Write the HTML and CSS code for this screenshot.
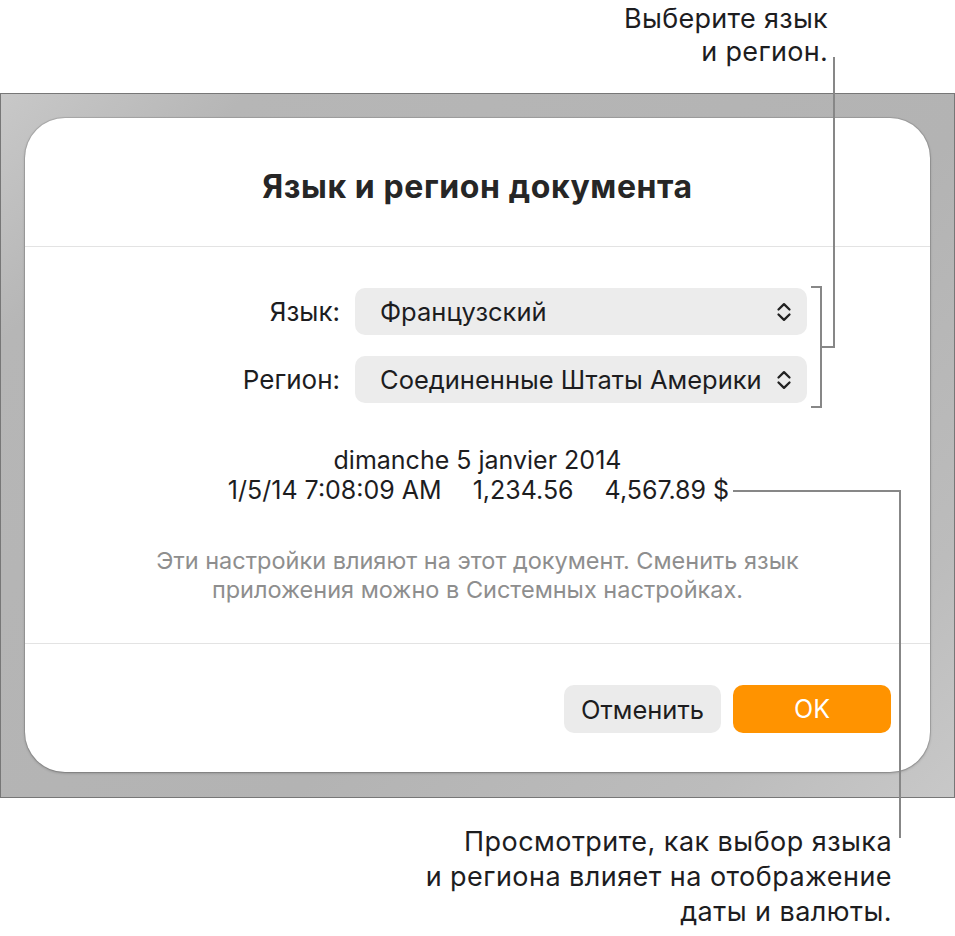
FILE: index.html
```html
<!DOCTYPE html>
<html lang="ru">
<head>
<meta charset="utf-8">
<link rel="stylesheet" href="styles.css">
</head>
<body>
<div class="page">
  <div class="callout callout-top">Выберите язык<br>и регион.</div>

  <div class="frame">
    <div class="dialog">
      <div class="dialog-header">Язык и регион документа</div>

      <div class="form">
        <div class="label">Язык:</div>
        <div class="select">
          <span>Французский</span>
          <svg class="chev" width="16" height="22" viewBox="0 0 16 22"><path d="M2.5 8.5 L8 3.2 L13.5 8.5 M2.5 13.5 L8 18.8 L13.5 13.5" fill="none" stroke="#222" stroke-width="2.3" stroke-linecap="round" stroke-linejoin="round"/></svg>
        </div>
        <div class="label">Регион:</div>
        <div class="select">
          <span>Соединенные Штаты Америки</span>
          <svg class="chev" width="16" height="22" viewBox="0 0 16 22"><path d="M2.5 8.5 L8 3.2 L13.5 8.5 M2.5 13.5 L8 18.8 L13.5 13.5" fill="none" stroke="#222" stroke-width="2.3" stroke-linecap="round" stroke-linejoin="round"/></svg>
        </div>
      </div>

      <div class="preview">
        <div>dimanche 5 janvier 2014</div>
        <div class="nums"><span>1/5/14 7:08:09 AM</span><span>1,234.56</span><span>4,567.89 $</span></div>
      </div>

      <div class="note">Эти настройки влияют на этот документ. Сменить язык<br>приложения можно в Системных настройках.</div>

      <div class="footer">
        <button class="btn btn-cancel">Отменить</button>
        <button class="btn btn-ok">OK</button>
      </div>
    </div>
  </div>

  <div class="callout callout-bottom">Просмотрите, как выбор языка<br>и региона влияет на отображение<br>даты и валюты.</div>

  <svg class="leaders" width="955" height="936" viewBox="0 0 955 936">
    <g fill="none" stroke="#878787" stroke-width="2">
      <path d="M811 287 H821 V407 H811"/>
      <path d="M821 347 H834 V57"/>
      <path d="M733 491 H900 V838"/>
    </g>
  </svg>
</div>
</body>
</html>
```

FILE: styles.css
```css
* { box-sizing: border-box; }

html, body {
  margin: 0;
  padding: 0;
  background: #ffffff;
}

body {
  font-family: "Inter", "Roboto", "Liberation Sans", sans-serif;
  color: #1d1d1f;
}

.page {
  position: relative;
  width: 955px;
  height: 936px;
  overflow: hidden;
}

.callout {
  font-size: 27px;
  line-height: 33px;
  color: #1d1d1f;
  text-align: right;
  letter-spacing: 0.3px;
  white-space: nowrap;
}

.callout-top {
  padding-top: 2px;
  padding-right: 127px;
  height: 93px;
}

.callout-bottom {
  margin-top: 26px;
  padding-right: 63px;
  line-height: 35px;
  letter-spacing: 0.45px;
}

.frame {
  width: 955px;
  height: 705px;
  border: 1px solid #777777;
  background: linear-gradient(135deg, #c8c8c8 0%, #b6b6b6 15%, #b3b3b3 60%, #bcbcbc 85%, #c8c8c8 100%);
  padding: 24px 23px 24px 24px;
}

.dialog {
  width: 905px;
  height: 654px;
  background: #ffffff;
  border-radius: 40px;
  box-shadow: 0 0 0 1px rgba(0,0,0,0.10), 0 1px 3px rgba(0,0,0,0.28);
  display: flex;
  flex-direction: column;
}

.dialog-header {
  height: 129px;
  border-bottom: 1px solid #e3e3e3;
  display: flex;
  align-items: center;
  justify-content: center;
  padding-top: 8px;
  font-size: 32px;
  letter-spacing: 0.6px;
  font-weight: 700;
  color: #262626;
}

.form {
  display: grid;
  grid-template-columns: 1fr 452px;
  column-gap: 15px;
  row-gap: 21px;
  padding: 41px 123px 0 0;
  align-items: center;
}

.label {
  text-align: right;
  font-size: 26px;
  color: #1d1d1f;
}

.select {
  height: 47px;
  border-radius: 10px;
  background: #ececec;
  display: flex;
  align-items: center;
  justify-content: space-between;
  padding: 0 15px 0 25px;
  font-size: 25.5px;
  color: #1d1d1f;
  white-space: nowrap;
}

.chev { display: block; flex: none; }

.preview {
  margin-top: 42px;
  text-align: center;
  font-size: 25px;
  line-height: 30px;
  color: #1d1d1f;
}

.nums {
  display: flex;
  justify-content: center;
  gap: 31px;
  padding-left: 2px;
}

.note {
  margin-top: 41px;
  text-align: center;
  font-size: 23.5px;
  line-height: 29px;
  color: #8e8e8e;
  height: 98px;
  border-bottom: 1px solid #e3e3e3;
  white-space: nowrap;
}

.footer {
  display: flex;
  justify-content: flex-end;
  gap: 12px;
  padding: 41px 39px 0 0;
}

.btn {
  height: 48px;
  width: 157px;
  border: none;
  border-radius: 10px;
  font-family: inherit;
  font-size: 25.5px;
  padding: 0;
}

.btn-cancel {
  background: #ebebeb;
  color: #1d1d1f;
}

.btn-ok {
  width: 158px;
  background: #ff9300;
  color: #ffffff;
  font-size: 25px;
}

.leaders {
  position: absolute;
  left: 0;
  top: 0;
  pointer-events: none;
}
```
